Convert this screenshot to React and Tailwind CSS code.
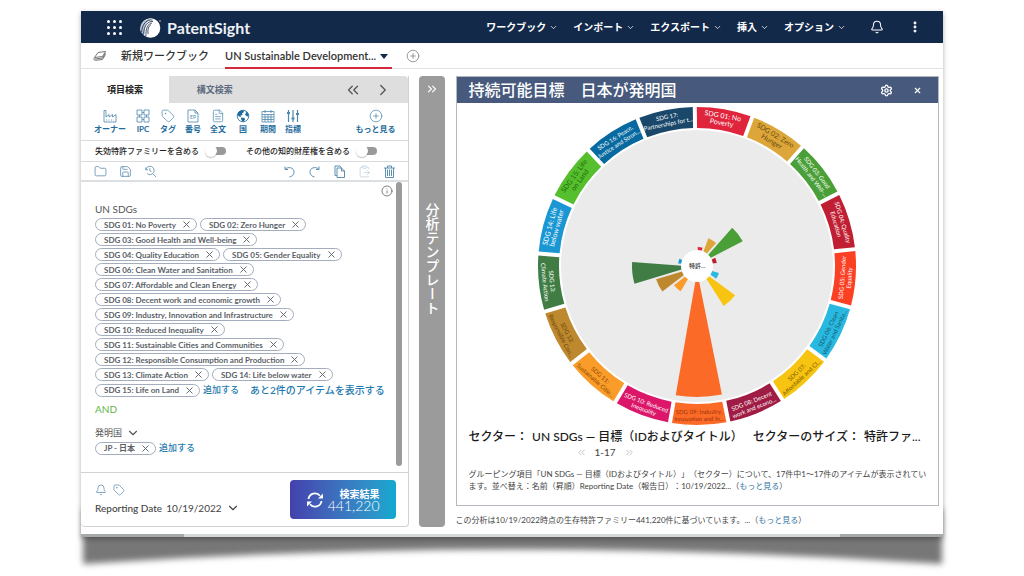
import {
  Bell,
  ChevronDown,
  ChevronRight,
  ChevronsLeft,
  ChevronsRight,
  CirclePlus,
  ClipboardPaste,
  EllipsisVertical,
  FileText,
  Files,
  Folder,
  Info,
  RefreshCw,
  Save,
  Settings,
  Tag,
  X,
} from 'lucide-react';

const menuItems = ['ワークブック', 'インポート', 'エクスポート', '挿入', 'オプション'];

const chipRows = [
  ['SDG 01: No Poverty', 'SDG 02: Zero Hunger'],
  ['SDG 03: Good Health and Well-being'],
  ['SDG 04: Quality Education', 'SDG 05: Gender Equality'],
  ['SDG 06: Clean Water and Sanitation'],
  ['SDG 07: Affordable and Clean Energy'],
  ['SDG 08: Decent work and economic growth'],
  ['SDG 09: Industry, Innovation and Infrastructure'],
  ['SDG 10: Reduced Inequality'],
  ['SDG 11: Sustainable Cities and Communities'],
  ['SDG 12: Responsible Consumption and Production'],
  ['SDG 13: Climate Action', 'SDG 14: Life below water'],
];

// size is the outer radius of the petal, 0 means nothing to draw
const sectors = [
  { label: ['SDG 01: No', 'Poverty'], color: '#e0243c', text: '#fff', size: 19 },
  { label: ['SDG 02: Zero', 'Hunger'], color: '#dca63a', text: '#6b4a0c', size: 30 },
  { label: ['SDG 03: Good', 'Health and Well-...'], color: '#4b9f38', text: '#fff', size: 52 },
  { label: ['SDG 04: Quality', 'Education'], color: '#c01f33', text: '#fff', size: 20 },
  { label: ['SDG 05: Gender', 'Equality'], color: '#fb4024', text: '#fff', size: 0 },
  { label: ['SDG 06: Clean', 'Water and Sanita...'], color: '#29b8df', text: '#10566e', size: 23 },
  { label: ['SDG 07:', 'Affordable and Cl...'], color: '#f8c412', text: '#7a5c00', size: 48 },
  { label: ['SDG 08: Decent', 'work and econo...'], color: '#9f1c44', text: '#fff', size: 0 },
  { label: ['SDG 09: Industry,', 'Innovation and In...'], color: '#fc6a28', text: '#9c3207', size: 131 },
  { label: ['SDG 10: Reduced', 'Inequality'], color: '#dc1668', text: '#fff', size: 0 },
  { label: ['SDG 11:', 'Sustainable Citie...'], color: '#fa9c29', text: '#8a4a00', size: 30 },
  { label: ['SDG 12:', 'Responsible Con...'], color: '#bd882e', text: '#6b4608', size: 43 },
  { label: ['SDG 13:', 'Climate Action'], color: '#3f7d44', text: '#fff', size: 65 },
  { label: ['SDG 14: Life', 'below water'], color: '#1a97d3', text: '#fff', size: 19 },
  { label: ['SDG 15: Life', 'on Land'], color: '#55bf2d', text: '#1f6b0a', size: 0 },
  { label: ['SDG 16: Peace,', 'Justice and Stron...'], color: '#0669a0', text: '#fff', size: 0 },
  { label: ['SDG 17:', 'Partnerships for t...'], color: '#1a486b', text: '#fff', size: 0 },
];

const STEP = 360 / sectors.length;
const START = -0.8;

const point = (radius, rad) => `${(radius * Math.sin(rad)).toFixed(2)} ${(-radius * Math.cos(rad)).toFixed(2)}`;

// ring segment with a constant gap between neighbours
const segmentPath = (index, inner, outer, pad) => {
  const from = ((START + index * STEP) * Math.PI) / 180;
  const to = ((START + (index + 1) * STEP) * Math.PI) / 180;
  const padIn = pad / inner;
  const padOut = pad / outer;
  return [
    `M${point(inner, from + padIn)}`,
    `L${point(outer, from + padOut)}`,
    `A${outer} ${outer} 0 0 1 ${point(outer, to - padOut)}`,
    `L${point(inner, to - padIn)}`,
    `A${inner} ${inner} 0 0 0 ${point(inner, from + padIn)}Z`,
  ].join(' ');
};

const SectorChart = () => (
  <svg viewBox="-160 -160 320 320" className="block w-80 max-w-full mx-auto font-['Lato','Noto_Sans_CJK_JP',sans-serif]">
    <circle r="136" fill="#ebebeb" />
    {sectors.map((sector, i) => {
      const angle = START + (i + 0.5) * STEP;
      const flipped = angle > 90 && angle < 270;
      const y = flipped ? 149 : -149;
      const longest = Math.max(sector.label[0].length, sector.label[1].length);
      return (
        <g key={sector.label[0]}>
          <path d={segmentPath(i, 138, 159, 2)} fill={sector.color} />
          {sector.size > 0 && <path d={segmentPath(i, 15, sector.size, 1)} fill={sector.color} />}
          <g
            transform={`rotate(${flipped ? angle - 180 : angle})`}
            fill={sector.text}
            fontSize={longest > 12 ? 6 : 7}
            textAnchor="middle"
          >
            <text y={y - 1}>{sector.label[0]}</text>
            <text y={y + 6}>{sector.label[1]}</text>
          </g>
        </g>
      );
    })}
    <circle r="16" fill="#fff" />
    <text y="2" fontSize="6" fontWeight="500" textAnchor="middle" fill="#333">特許...</text>
  </svg>
);

const Logo = () => (
  <svg viewBox="0 0 22 22" className="size-[22px]">
    <circle cx="11.5" cy="11" r="9.8" fill="#fff" />
    <path d="M1 13C1 5 7 1 14 1.500C8 3 5 8 6 17C3 16 1.500 15 1 13Z" fill="#b9c4d2" />
    <g fill="none" stroke="#14284a" strokeWidth="0.8">
      <path d="M13.500 3C8 2.500 3.500 6 2.500 15" />
      <path d="M14 4.500C9 4 5 8 4.500 17.500" />
      <path d="M13 6C9 6.500 6.500 11 7 19.500" />
      <path d="M12 7.500C9.500 9 8.500 12 9 17" />
    </g>
    <circle cx="21" cy="4" r="0.700" fill="#fff" />
  </svg>
);

const FactoryIcon = () => (
  <svg viewBox="0 0 14 14" className="size-[14px]" fill="none" stroke="currentColor" strokeWidth="0.8">
    <path d="M1 13V1.500H3V8L6 5.500V8L9.500 5.500V8L13 5.500V13Z" />
    <path d="M3 11H11" strokeDasharray="1 1.500" />
  </svg>
);

const IpcIcon = () => (
  <svg viewBox="0 0 14 14" className="size-[14px]" fill="none" stroke="currentColor" strokeWidth="0.8">
    <path d="M1 1H6V6H1ZM8 1H13V6H8ZM1 8H6V13H1ZM8 8H13V13H8ZM6 3.500H8M6 10.500H8M3.500 6V8M10.500 6V8" />
  </svg>
);

const EpIcon = () => (
  <svg viewBox="0 0 14 14" className="size-[14px]" fill="none" stroke="currentColor" strokeWidth="0.8">
    <path d="M2 1H9L12 4V13H2ZM9 1V4H12" />
    <text x="7" y="10" fontSize="5" textAnchor="middle" fill="currentColor" stroke="none">EP</text>
  </svg>
);

const GlobeIcon = () => (
  <svg viewBox="0 0 14 14" className="size-[14px]">
    <circle cx="7" cy="7" r="5.800" fill="#fff" stroke="#1a6a9e" strokeWidth="0.8" />
    <path d="M2 4C3 2 5 1 7.500 1.200L8 3L6 4.500L6.500 6L4.500 6.500L5 8L3 7.500L1.500 6Z" fill="#1a6a9e" />
    <path d="M9.500 2L12 4.500L12.800 7L11 7.500L9 5.500L10 4Z" fill="#1a6a9e" />
    <path d="M5.500 8.500L8.500 9L9 10.500L7.500 12.800L6 12L5 10Z" fill="#1a6a9e" />
  </svg>
);

const CalendarIcon = () => (
  <svg viewBox="0 0 14 14" className="size-[14px]" fill="none" stroke="currentColor" strokeWidth="0.8">
    <path d="M1 2.500H13V13H1ZM1 5.500H13M1 8H13M1 10.500H13M4 5.500V13M7 5.500V13M10 5.500V13M4 1V4M10 1V4" />
  </svg>
);

const MetricsIcon = () => (
  <svg viewBox="0 0 14 14" className="size-[14px]" stroke="currentColor" strokeWidth="1.2">
    <path d="M2.500 1V13M7 1V13M11.500 1V13" />
    <path d="M1 4H4M5.500 9.500H8.500M10 5H13" strokeWidth="2.200" />
  </svg>
);

const HistorySearchIcon = () => (
  <svg viewBox="0 0 14 14" className="size-[13px]" fill="none" stroke="currentColor" strokeWidth="0.9">
    <path d="M2 5A4.500 4.500 0 1 1 3.500 9.300M9.500 9.300L13 13M2 2.500V5.200H4.500M6.300 3.500V6.200L8 7.200" />
  </svg>
);

const UndoIcon = () => (
  <svg viewBox="0 0 13 13" className="size-[13px]" fill="none" stroke="currentColor" strokeWidth="1">
    <path d="M2 1.500V4.500H5M2 4.500C5 1 11.500 2.500 11 7.500C10.800 9.800 9 11.500 6.500 12" />
  </svg>
);

const RedoIcon = () => (
  <svg viewBox="0 0 13 13" className="size-[13px]" fill="none" stroke="currentColor" strokeWidth="1">
    <path d="M11 1.500V4.500H8M11 4.500C8 1 1.500 2.500 2 7.500C2.200 9.800 4 11.500 6.500 12" />
  </svg>
);

const CopyIcon = () => (
  <svg viewBox="0 0 13 13" className="size-[13px]" fill="none" stroke="currentColor" strokeWidth="1">
    <path d="M4 3H8.500L11.500 6V12.500H4ZM8.500 3V6H11.500M4 10.500H2V1H7L8.500 3" />
  </svg>
);

const TrashIcon = () => (
  <svg viewBox="0 0 13 13" className="size-[13px]" fill="none" stroke="currentColor" strokeWidth="1">
    <path d="M1 3H12M4.500 3V1H8.500V3M2.500 3V12.500H10.500V3M4.500 4.500V11M6.500 4.500V11M8.500 4.500V11" />
  </svg>
);

const StackIcon = () => (
  <svg viewBox="0 0 14 12" className="w-[14px] h-3" fill="none" stroke="#666" strokeWidth="0.9">
    <path d="M5 2.500L12.500 1.500L9.500 6.500L1.500 7.500Z" />
    <path d="M1.500 7.500C0.500 9 1 10.500 2.500 10.300L9.500 9.500L12.500 4.500M2 9L9.500 8L12.500 3" />
  </svg>
);

// two arrows with filled heads chasing each other
const RefreshIcon = () => (
  <svg viewBox="0 0 18 18" className="size-[18px]" fill="none" stroke="currentColor" strokeWidth="1.8">
    <path d="M2.500 8A6.500 6.500 0 0 1 14 4.800M15.500 10A6.500 6.500 0 0 1 4 13.200" />
    <path d="M17 2.500V7.500H12ZM1 15.500V10.500H6Z" fill="currentColor" stroke="none" />
  </svg>
);

const tools = [
  { label: 'オーナー', icon: <FactoryIcon /> },
  { label: 'IPC', icon: <IpcIcon /> },
  { label: 'タグ', icon: <Tag size={14} strokeWidth={1.25} /> },
  { label: '番号', icon: <EpIcon /> },
  { label: '全文', icon: <FileText size={14} strokeWidth={1.25} /> },
  { label: '国', icon: <GlobeIcon /> },
  { label: '期間', icon: <CalendarIcon /> },
  { label: '指標', icon: <MetricsIcon /> },
];

const ToolButton = ({ label, icon }) => (
  <button className="flex flex-col items-center min-w-4 text-[#4d87ad]">
    {icon}
    <span className="text-[8px] leading-3 font-bold text-[#1f6d9e]">{label}</span>
  </button>
);

const Toggle = ({ id, label }) => (
  <div className="flex items-center gap-[6px]">
    <label htmlFor={id} className="text-[8px] font-medium text-[#222]">{label}</label>
    <input
      id={id}
      type="checkbox"
      className="relative appearance-none w-[21px] h-2 rounded-sm bg-gradient-to-r from-white from-40% to-[#999] to-40% before:absolute before:left-0 before:-top-[2px] before:size-3 before:rounded-full before:bg-white before:shadow-[0_1px_1px_rgba(0,0,0,0.25)]"
    />
  </div>
);

const Chip = ({ children }) => (
  <span className="flex items-center gap-[5px] h-[13px] pl-2 pr-1 border border-[#a3adbd] rounded-full text-[8px] leading-none font-bold text-[#5a5f68]">
    {children}
    <button aria-label="削除">
      <X size={11} strokeWidth={2} />
    </button>
  </span>
);

const More = () => (
  <>
    （<a href="#more" className="text-[#2f74a6]">もっと見る</a>）
  </>
);

const Header = () => (
  <header className="flex items-center h-8 pl-[26px] pr-[21px] bg-[#13294a] text-white">
    <button aria-label="アプリ" className="grid grid-cols-3 gap-[3px]">
      {Array.from({ length: 9 }, (_, i) => (
        <span key={i} className="size-[3px] rounded-full bg-white" />
      ))}
    </button>
    <div className="flex items-center gap-[6px] ml-[17px] pt-[2px]">
      <Logo />
      <span className="text-[16px] font-bold text-[#eef1f5]">PatentSight</span>
    </div>
    <nav className="flex items-center gap-[15px] ml-auto">
      {menuItems.map((item) => (
        <button key={item} className="flex items-center gap-[3px] text-[10px] font-bold">
          {item}
          <ChevronDown size={9} strokeWidth={2} />
        </button>
      ))}
    </nav>
    <button aria-label="通知" className="ml-6">
      <Bell size={14} strokeWidth={1.75} />
    </button>
    <button aria-label="メニュー" className="ml-6">
      <EllipsisVertical size={14} strokeWidth={3} />
    </button>
  </header>
);

const WorkbookTabs = () => (
  <div className="flex items-center h-[26px] pl-3 border-b border-[#dfe3e6] text-[#333]">
    <StackIcon />
    <button className="ml-[14px] pt-[2px] text-[11px] font-medium">新規ワークブック</button>
    <button className="flex items-center justify-between w-[167px] h-[26px] ml-4 pt-1 pr-1 border-b-2 border-[#d42b3c] text-[11px] font-semibold whitespace-nowrap">
      UN Sustainable Development...
      <svg viewBox="0 0 8 5" className="w-2 h-[5px]">
        <path d="M0 0H8L4 5Z" fill="#13294a" />
      </svg>
    </button>
    <button aria-label="追加" className="ml-[14px] text-[#777]">
      <CirclePlus size={14} strokeWidth={1.25} />
    </button>
  </div>
);

const SearchPanel = () => (
  <section className="flex flex-col w-[38%] border-r border-b border-[#d0d3d6] rounded-b-sm">
    <div className="flex h-[27px] bg-[#dedede] rounded-tr-sm text-[9px]">
      <button className="w-[27%] bg-white font-bold text-[#222]">項目検索</button>
      <button className="w-[28%] font-bold text-[#5d6b80]">構文検索</button>
      <div className="flex items-center gap-3 ml-auto pr-4 text-[#555]">
        <button aria-label="最初へ"><ChevronsLeft size={18} strokeWidth={1.75} /></button>
        <button aria-label="次へ"><ChevronRight size={18} strokeWidth={1.75} /></button>
      </div>
    </div>

    <div className="flex items-center gap-[9px] h-[38px] pl-[13px] pr-3 py-1 border-b border-[#d9dcdf]">
      {tools.map((tool) => (
        <ToolButton key={tool.label} {...tool} />
      ))}
      <div className="ml-auto">
        <ToolButton label="もっと見る" icon={<CirclePlus size={14} strokeWidth={1.25} />} />
      </div>
    </div>

    <div className="flex items-center gap-5 h-[21px] pl-[14px] border-b border-[#d9dcdf]">
      <Toggle id="expired" label="失効特許ファミリーを含める" />
      <Toggle id="others" label="その他の知的財産権を含める" />
    </div>

    <div className="flex items-center gap-3 h-5 pl-[13px] pr-3 border-b-2 border-[#dcdfe1] text-[#5f8fb0]">
      <button aria-label="開く"><Folder size={13} strokeWidth={1.5} /></button>
      <button aria-label="保存"><Save size={13} strokeWidth={1.5} /></button>
      <button aria-label="履歴"><HistorySearchIcon /></button>
      <button aria-label="元に戻す" className="ml-auto"><UndoIcon /></button>
      <button aria-label="やり直す"><RedoIcon /></button>
      <button aria-label="コピー"><CopyIcon /></button>
      <button aria-label="貼り付け" className="opacity-40"><ClipboardPaste size={13} strokeWidth={1.5} /></button>
      <button aria-label="消去"><TrashIcon /></button>
    </div>

    <div className="flex flex-1">
      <div className="flex-1 pl-[14px] pt-[3px] text-[#555]">
        <Info size={12} strokeWidth={1.5} className="ml-auto mr-[3px]" />
        <p className="mt-1 text-[10px] leading-4">UN SDGs</p>
        <div className="flex flex-col gap-[2px] mt-px">
          {chipRows.map((row) => (
            <div key={row[0]} className="flex gap-[3px]">
              {row.map((name) => (
                <Chip key={name}>{name}</Chip>
              ))}
            </div>
          ))}
          <div className="flex items-center gap-[3px] h-[14px] text-[#1f7ab0]">
            <Chip>SDG 15: Life on Land</Chip>
            <a href="#add" className="text-[9px] font-medium">追加する</a>
            <a href="#all" className="ml-2 text-[10px] font-medium">あと2件のアイテムを表示する</a>
          </div>
        </div>
        <p className="mt-1 text-[10px] leading-4 text-[#63b548]">AND</p>
        <button className="flex items-center gap-1 mt-2 text-[9px] leading-4">
          発明国
          <ChevronDown size={14} strokeWidth={2} />
        </button>
        <div className="flex items-center gap-[3px] h-[14px] text-[#1f7ab0]">
          <Chip>JP - 日本</Chip>
          <a href="#add-country" className="text-[9px] font-medium">追加する</a>
        </div>
      </div>
      <div className="w-[6px] mr-[6px] mb-[6px] bg-[#9b9b9b] rounded-full" />
    </div>

    <div className="flex items-center justify-between h-[54px] pl-[14px] pr-3 border-t border-[#d0d3d6]">
      <div>
        <div className="flex gap-[6px] text-[#5f8fb0]">
          <Bell size={12} strokeWidth={1.5} />
          <Tag size={12} strokeWidth={1.5} />
        </div>
        <button className="flex items-center gap-1 mt-1 text-[10px] leading-4 text-[#444]">
          <span className="font-medium">Reporting Date</span>
          <span>10/19/2022</span>
          <ChevronDown size={14} strokeWidth={2} />
        </button>
      </div>
      <button className="flex items-center justify-between w-[106px] h-[39px] px-4 rounded-sm bg-gradient-to-r from-[#4340ad] to-[#0fa9d0] text-white">
        <RefreshIcon />
        <span className="text-right">
          <span className="block text-[10px] leading-3 font-bold">検索結果</span>
          <span className="block text-[14px] leading-3 font-light">441,220</span>
        </span>
      </button>
    </div>
  </section>
);

const TemplateStrip = () => (
  <aside className="flex flex-col items-center w-[26px] pt-[6px] bg-[#9b9b9b] rounded-sm text-white">
    <button aria-label="開く"><ChevronsRight size={14} strokeWidth={2} /></button>
    <h2 className="mt-[107px] text-[14px] leading-none font-medium [writing-mode:vertical-rl]">分析テンプレート</h2>
  </aside>
);

const ChartPanel = () => (
  <section className="flex-1 min-w-0 pb-px [text-spacing-trim:space-all]">
    <div className="border border-[#b4b9bf]">
      <div className="flex items-center h-[26px] pl-3 pr-4 bg-[#475a7d] text-white">
        <h1 className="text-[16px] leading-none font-medium">持続可能目標　日本が発明国</h1>
        <button aria-label="設定" className="ml-auto"><Settings size={13} strokeWidth={2.5} /></button>
        <button aria-label="閉じる" className="ml-5"><X size={9} strokeWidth={3} /></button>
      </div>
      <div className="pt-[3px] pb-[13px]">
        <SectorChart />
        <div className="pl-3 pr-1">
          <p className="flex gap-1 mt-[2px] text-[12px] leading-[18px] font-medium text-[#1a1a1a] whitespace-nowrap">
            <span>セクター：</span>
            <span>UN SDGs ― 目標（IDおよびタイトル）</span>
            <span className="ml-[6px]">セクターのサイズ：</span>
            <span>特許ファ...</span>
          </p>
          <div className="flex items-center gap-2 ml-[107px] text-[10px] leading-3 text-[#444]">
            <ChevronsLeft size={11} strokeWidth={1.5} className="text-[#aaa]" />
            1-17
            <ChevronsRight size={11} strokeWidth={1.5} className="text-[#aaa]" />
          </div>
          <p className="mt-[10px] text-[8px] leading-3 text-[#444]">
            グルーピング項目「UN SDGs ― 目標（IDおよびタイトル）」（セクター）について、17件中1～17件のアイテムが表示されています。並べ替え：名前（昇順）Reporting Date（報告日）：10/19/2022...<More />
          </p>
        </div>
      </div>
    </div>
    <p className="mt-2 text-[8px] leading-3 text-[#444]">
      この分析は10/19/2022時点の生存特許ファミリー441,220件に基づいています。...<More />
    </p>
  </section>
);

export default function App() {
  return (
    <div className="px-[81px] pt-[11px] pb-10 bg-white overflow-hidden font-['Lato','Noto_Sans_CJK_JP',sans-serif]">
      <div className="relative">
        <svg viewBox="0 0 862 60" preserveAspectRatio="none" className="absolute left-0 -bottom-8 w-full h-[60px] overflow-visible">
          <defs>
            <filter id="lift" x="-5%" y="-20%" width="110%" height="150%">
              <feGaussianBlur stdDeviation="3" />
            </filter>
          </defs>
          <path d="M2 0H861V55Q431 26 2 55Z" fill="#777" filter="url(#lift)" />
        </svg>
        <main className="relative bg-white shadow-[0_2px_5px_rgba(0,0,0,0.3)]">
          <Header />
          <WorkbookTabs />
          <div className="flex pt-[7px] pb-[7px]">
            <SearchPanel />
            <div className="flex flex-1 min-w-0 gap-[11px] pl-[10px] pr-1">
              <TemplateStrip />
              <ChartPanel />
            </div>
          </div>
          <div className="flex justify-between h-[3px] bg-[#d5d8d8]">
            <span className="w-[12%] bg-[#a5a9a9]" />
            <span className="w-[12%] bg-[#a5a9a9]" />
          </div>
        </main>
      </div>
    </div>
  );
}
